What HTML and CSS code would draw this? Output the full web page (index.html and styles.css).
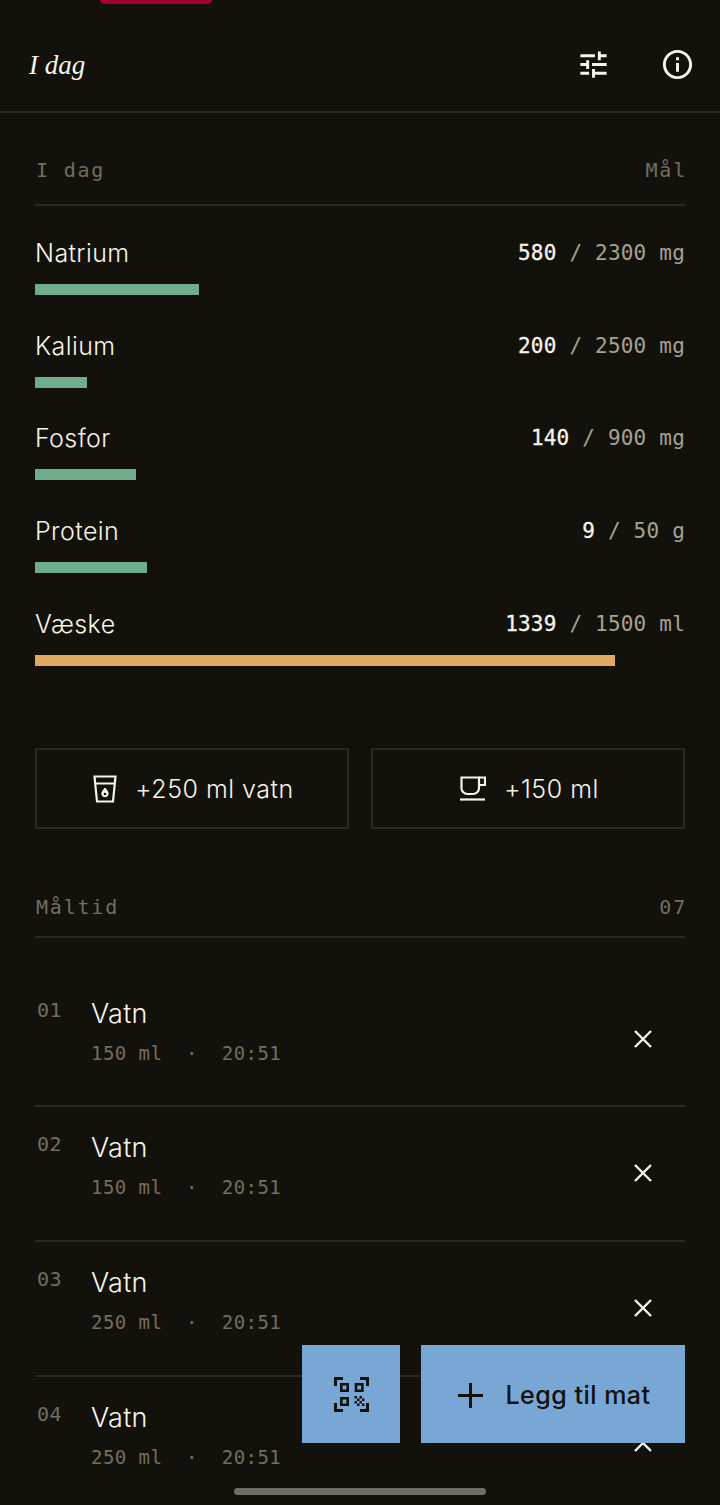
FILE: index.html
```html
<!DOCTYPE html>
<html lang="no">
<head>
    <meta charset="UTF-8">
    <meta name="viewport" content="width=device-width, initial-scale=1.0">
    <title>I dag</title>
    <link rel="stylesheet" href="styles.css">
</head>
<body>
    <div class="notch"></div>

    <header class="topbar">
        <h1 class="title">I dag</h1>
        <div class="topbar-icons">
            <svg class="icon-top" viewBox="0 0 24 24"><path d="M3 17v2h6v-2H3zM3 5v2h10V5H3zm10 16v-2h8v-2h-8v-2h-2v6h2zM7 9v2H3v2h4v2h2V9H7zm14 4v-2H11v2h10zm-6-4h2V7h4V5h-4V3h-2v6z"/></svg>
            <svg class="icon-top" viewBox="0 0 24 24"><path d="M11 7h2v2h-2zm0 4h2v6h-2zm1-9C6.48 2 2 6.48 2 12s4.48 10 10 10 10-4.48 10-10S17.52 2 12 2zm0 18c-4.41 0-8-3.59-8-8s3.59-8 8-8 8 3.59 8 8-3.59 8-8 8z"/></svg>
        </div>
    </header>

    <main class="content">
        <div class="section-head section-head-top">
            <span>I dag</span>
            <span>Mål</span>
        </div>

        <div class="nutrient">
            <div class="nutrient-row">
                <span class="nutrient-name">Natrium</span>
                <span class="nutrient-value"><b>580</b> / 2300 mg</span>
            </div>
            <div class="bar" style="width: 25.2%"></div>
        </div>
        <div class="nutrient">
            <div class="nutrient-row">
                <span class="nutrient-name">Kalium</span>
                <span class="nutrient-value"><b>200</b> / 2500 mg</span>
            </div>
            <div class="bar" style="width: 8%"></div>
        </div>
        <div class="nutrient">
            <div class="nutrient-row">
                <span class="nutrient-name">Fosfor</span>
                <span class="nutrient-value"><b>140</b> / 900 mg</span>
            </div>
            <div class="bar" style="width: 15.5%"></div>
        </div>
        <div class="nutrient">
            <div class="nutrient-row">
                <span class="nutrient-name">Protein</span>
                <span class="nutrient-value"><b>9</b> / 50 g</span>
            </div>
            <div class="bar" style="width: 17.2%"></div>
        </div>
        <div class="nutrient">
            <div class="nutrient-row">
                <span class="nutrient-name">Væske</span>
                <span class="nutrient-value"><b>1339</b> / 1500 ml</span>
            </div>
            <div class="bar bar-warn" style="width: 89.3%"></div>
        </div>

        <div class="quick-add">
            <button class="quick-btn">
                <svg class="icon-glass" viewBox="0 0 24 28" fill="none" stroke="currentColor" stroke-width="2.200">
                    <path d="M1.500 1.500h21L20 26.500H4zM2.200 8.500h19.600"/>
                    <path class="drop" d="M12 13c2 2.400 3.200 4 3.200 5.600a3.200 3.200 0 0 1-6.400 0c0-1.600 1.200-3.200 3.200-5.600z" stroke-width="1"/>
                    <circle class="drop-hole" cx="12" cy="19" r="1.300"/>
                </svg>
                +250 ml vatn
            </button>
            <button class="quick-btn">
                <svg class="icon-cup" viewBox="0 0 26 25" fill="none" stroke="currentColor" stroke-width="2.200">
                    <path d="M1.500 1.500h17.500V12a6 6 0 0 1-6 6H7.500a6 6 0 0 1-6-6z"/>
                    <path d="M19 1.500h6V9h-6"/>
                    <path d="M0 23.500h25"/>
                </svg>
                +150 ml
            </button>
        </div>

        <div class="section-head section-head-meals">
            <span>Måltid</span>
            <span>07</span>
        </div>

        <ul class="meals">
            <li class="meal">
                <span class="meal-num">01</span>
                <div class="meal-info">
                    <div class="meal-name">Vatn</div>
                    <div class="meal-sub">150 ml  ·  20:51</div>
                </div>
                <svg class="icon-x" viewBox="0 0 18 18"><path d="M1 1l16 16M17 1L1 17"/></svg>
            </li>
            <li class="meal">
                <span class="meal-num">02</span>
                <div class="meal-info">
                    <div class="meal-name">Vatn</div>
                    <div class="meal-sub">150 ml  ·  20:51</div>
                </div>
                <svg class="icon-x" viewBox="0 0 18 18"><path d="M1 1l16 16M17 1L1 17"/></svg>
            </li>
            <li class="meal">
                <span class="meal-num">03</span>
                <div class="meal-info">
                    <div class="meal-name">Vatn</div>
                    <div class="meal-sub">250 ml  ·  20:51</div>
                </div>
                <svg class="icon-x" viewBox="0 0 18 18"><path d="M1 1l16 16M17 1L1 17"/></svg>
            </li>
            <li class="meal">
                <span class="meal-num">04</span>
                <div class="meal-info">
                    <div class="meal-name">Vatn</div>
                    <div class="meal-sub">250 ml  ·  20:51</div>
                </div>
                <svg class="icon-x" viewBox="0 0 18 18"><path d="M1 1l16 16M17 1L1 17"/></svg>
            </li>
        </ul>
    </main>

    <!-- floating actions -->
    <div class="fab-row">
        <button class="fab fab-scan">
            <svg class="icon-scan" viewBox="0 0 35 35">
                <path class="scan-line" d="M1.500 9V1.500H9M26 1.500h7.500V9M1.500 26v7.500H9M33.500 26v7.500H26" stroke-width="3"/>
                <path class="scan-line" d="M7.300 7.300h6.400v6.400H7.300zM22 7.300h6.400v6.400H22zM7.300 21.300h6.400v6.400H7.300z" stroke-width="2.600"/>
                <path d="M20.500 19H23v2.500h-2.500zM25.500 19H28v2.500h-2.500zM23 21.500h2.500V24H23zM28 21.500h2.500V24H28zM20.500 24H23v2.500h-2.500zM25.500 24H28v2.500h-2.500zM23 26.500h2.500V29H23zM28 26.500h2.500V29H28z"/>
            </svg>
        </button>
        <button class="fab fab-add">
            <svg class="icon-plus" viewBox="0 0 25 25"><path d="M12.500 0v25M0 12.500h25"/></svg>
            Legg til mat
        </button>
    </div>

    <div class="home-bar"></div>
</body>
</html>
```

FILE: styles.css
```css
* {
    box-sizing: border-box;
}
html, body {
    margin: 0;
    height: 1505px;
    overflow: hidden;
}
body {
    position: relative;
    width: 720px;
    background-color: #13110c;
    color: #f8f3e7;
    font-family: Inter, "Noto Sans", sans-serif;
}

.notch {
    position: absolute;
    top: 0;
    left: 100px;
    width: 112px;
    height: 4px;
    background-color: #a00030;
    border-radius: 0 0 8px 8px;
}

.topbar {
    display: flex;
    align-items: center;
    justify-content: space-between;
    height: 113px;
    padding: 33px 25px 16px 29px;
    border-bottom: 2px solid #2b2820;
}
.title {
    margin: 2px 0 0;
    font-family: "Liberation Serif", serif;
    font-style: italic;
    font-weight: 400;
    font-size: 27px;
}
.topbar-icons {
    display: flex;
    gap: 49px;
}
.icon-top {
    width: 35px;
    height: 35px;
    fill: #f8f3e7;
}

.content {
    padding: 0 35px;
}

.section-head {
    display: flex;
    justify-content: space-between;
    padding: 0 0 0 1px;
    line-height: 24px;
    border-bottom: 2px solid #2b2820;
    font-family: "DejaVu Sans Mono", monospace;
    font-size: 20px;
    letter-spacing: 1.800px;
    color: #756d60;
}
.section-head span:last-child {
    margin-right: -2px;
}
.section-head-top {
    margin: 45px 0 28px;
    padding-bottom: 22px;
}
.section-head-meals {
    padding-bottom: 17px;
}

.nutrient {
    height: 92.700px;
}
.nutrient-row {
    display: flex;
    justify-content: space-between;
    align-items: center;
    height: 38px;
}
.nutrient-name {
    font-size: 25px;
    font-weight: 300;
    letter-spacing: 0.400px;
}
.nutrient-value {
    font-family: "DejaVu Sans Mono", monospace;
    font-size: 21px;
    letter-spacing: 0.200px;
    color: #a8a192;
}
.nutrient-value b {
    font-weight: 400;
    color: #f8f3e7;
    -webkit-text-stroke: 0.300px #f8f3e7;
}
.bar {
    height: 11px;
    margin-top: 12px;
    background-color: #6fae8c;
}
.bar-warn {
    background-color: #e0a961;
}

.quick-add {
    display: grid;
    grid-template-columns: 1fr 1fr;
    gap: 22px;
    margin-top: 51px;
    margin-bottom: 66px;
}
.quick-btn {
    display: flex;
    align-items: center;
    justify-content: center;
    gap: 18px;
    height: 81px;
    padding: 0 0 0 3px;
    background: none;
    border: 2px solid #2b2820;
    color: #f8f3e7;
    font-family: Inter, "Noto Sans", sans-serif;
    font-size: 25px;
    font-weight: 300;
    letter-spacing: 0.500px;
}
.icon-glass {
    width: 24px;
    height: 28px;
}
.icon-cup {
    width: 26px;
    height: 25px;
}
.drop {
    fill: currentColor;
}
.drop-hole {
    fill: #13110c;
    stroke: none;
}

.meals {
    list-style: none;
    margin: 0;
    padding: 0;
}
.meal {
    display: flex;
    height: 134.600px;
    padding-top: 25px;
    border-bottom: 2px solid #2b2820;
}
.meal:first-child {
    height: 169px;
    padding-top: 60px;
}
.meal-num {
    width: 56px;
    padding-left: 2px;
    font-family: "DejaVu Sans Mono", monospace;
    font-size: 20px;
    letter-spacing: 0.500px;
    color: #756d60;
}
.meal-info {
    flex: 1;
}
.meal-name {
    font-size: 27px;
    font-weight: 300;
    letter-spacing: 0.300px;
    line-height: 32px;
}
.meal-sub {
    margin-top: 12px;
    font-family: "DejaVu Sans Mono", monospace;
    font-size: 19px;
    letter-spacing: 0.450px;
    color: #756d60;
    white-space: pre;
}
.icon-x {
    width: 18px;
    height: 18px;
    margin: 32px 33px 0 0;
    fill: none;
    stroke: #f8f3e7;
    stroke-width: 2.400px;
}

.fab-row {
    position: absolute;
    top: 1345px;
    right: 35px;
    display: flex;
    gap: 21px;
}
.fab {
    display: flex;
    align-items: center;
    justify-content: center;
    height: 98px;
    padding: 0;
    border: none;
    background-color: #78a7d6;
    color: #13110c;
    font-family: Inter, "Noto Sans", sans-serif;
    font-size: 25px;
    font-weight: 500;
    letter-spacing: 0.500px;
}
.fab-scan {
    width: 98px;
}
.fab-add {
    width: 264px;
    gap: 22px;
    padding: 2px 0 0 3px;
}
.icon-scan {
    width: 35px;
    height: 35px;
    fill: #13110c;
}
.scan-line {
    fill: none;
    stroke: #13110c;
}
.icon-plus {
    width: 25px;
    height: 25px;
    fill: none;
    stroke: #13110c;
    stroke-width: 3px;
}

.home-bar {
    position: absolute;
    left: 234px;
    top: 1488px;
    width: 252px;
    height: 7px;
    border-radius: 4px;
    background-color: #6e6c66;
}
```
